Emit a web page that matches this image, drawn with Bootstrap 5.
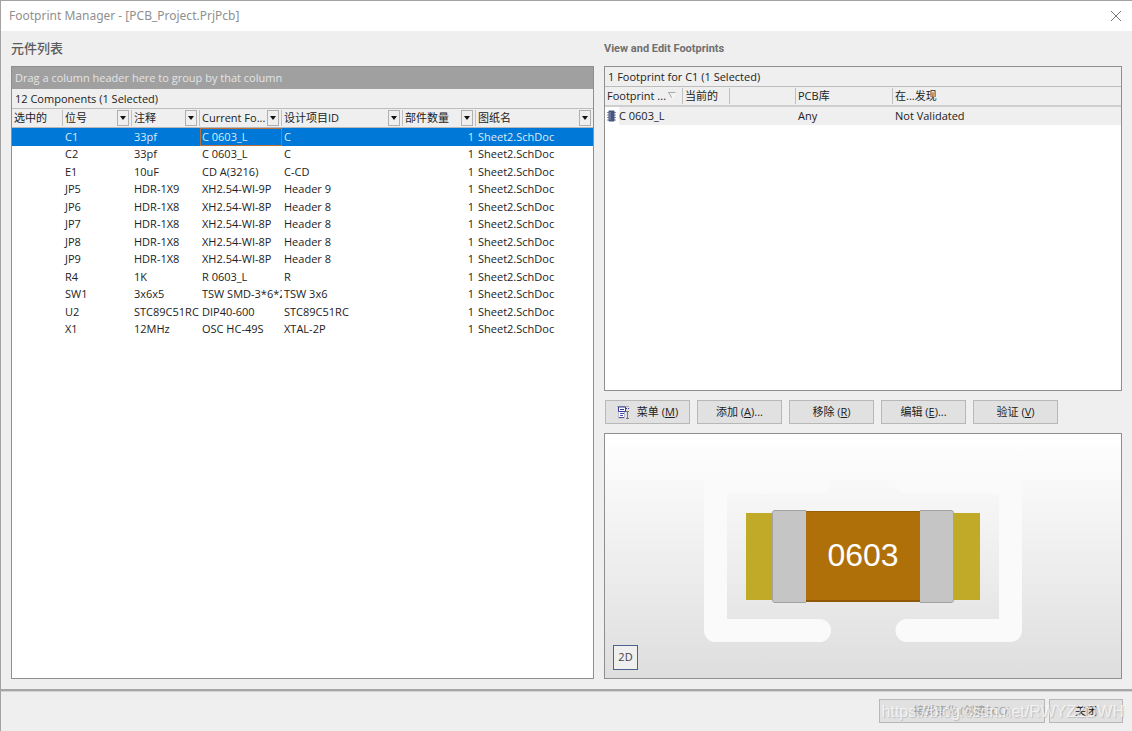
<!DOCTYPE html>
<html lang="zh-CN">
<head>
<meta charset="utf-8">
<meta name="viewport" content="width=device-width, initial-scale=1">
<title>Footprint Manager - [PCB_Project.PrjPcb]</title>
<link href="https://cdn.jsdelivr.net/npm/bootstrap@5.3.0/dist/css/bootstrap.min.css" rel="stylesheet">
<style>
  body { font-family: "Open Sans", "Noto Sans CJK SC", sans-serif; font-size: 11px; line-height: 16px; color: #222; background: #efefef; }
  .window-frame { border-top: 1px solid #a3a3a3; border-left: 1px solid #a3a3a3; }
  .title-strip { height: 30px; padding: 0 10px 0 8px; background: #fff; }
  .title-text { font-family: "Noto Sans", sans-serif; font-size: 12px; color: #8f8f8f; }
  .close-btn { width: 12px; height: 12px; }
  .work-area { padding: 7px 10px 10px 10px; gap: 10px; min-height: 0; }
  .pane-left { flex: 583 1 0; min-width: 0; }
  .pane-right { flex: 518 1 0; min-width: 0; }
  .pane-title { height: 28px; line-height: 20px; color: #5c5c5c; }
  .pane-title-cn { font-size: 13px; font-weight: 500; }
  .pane-title-en { font-family: Roboto, sans-serif; font-size: 11px; line-height: 22px; font-weight: 700; color: #707070; }
  .panel { border: 1px solid #8f8f8f; background: #fff; overflow: hidden; }
  .group-strip { height: 22px; line-height: 22px; padding-left: 3px; background: #a0a0a0; color: #e4e4e4; }
  .count-strip { height: 20px; line-height: 19px; padding-left: 3px; background: #efefef; border-bottom: 1px solid #bcbcbc; }
  .grid { width: 100%; table-layout: fixed; border-collapse: separate; border-spacing: 0; }
  .grid th, .grid td { padding: 0 0 0 2px; white-space: nowrap; overflow: hidden; font-weight: 400; }
  .grid th { height: 19px; background: #efefef; border-bottom: 1px solid #b8b8b8; line-height: 16px; }
  .grid th .head-cell { height: 16px; padding-right: 2px; border-right: 1px solid #c0c0c0; }
  .grid th:last-child .head-cell { border-right: 0; }
  .grid td { height: 18px; line-height: 16px; padding-bottom: 1px; }
  .grid tr:nth-child(even) td { height: 17px; }
  .grid tr.chosen td { background: #0078d7; color: #dcebf9; }
  .grid td.focused { outline: 1px solid #b5703c; outline-offset: -1px; }
  .grid td.quantity { padding-right: 2px; }
  .drop-btn { width: 12px; height: 16px; padding: 0; border: 1px solid #b0b0b0; background: #efefef; }
  .drop-btn svg { display: block; margin: auto; }
  .foot-grid th { height: 20px; border-bottom: 2px solid #cfcfcf; }
  .foot-grid td { background: #efefef; }
  .foot-grid td:first-child { background: linear-gradient(to right, #fff 14px, #efefef 14px); }
  .foot-grid .chip-icon { margin-right: 3px; }
  .foot-panel { height: 325px; }
  .tool-row { padding: 9px 1px; gap: 7px; }
  .push-btn { height: 24px; padding: 0; color: #222; background: #e1e1e1; border: 1px solid #b8b8b8; font-size: 11px; line-height: 20px; }
  .tool-row .push-btn { width: 85px; }
  .preview { background: linear-gradient(#fff, #dedede); min-height: 0; }
  .preview svg { display: block; width: 100%; height: 100%; }
  .mode-btn { left: 8px; bottom: 8px; width: 25px; height: 25px; padding: 0; border: 1px solid #4f6090; background: #efefef; color: #444; font-size: 11px; }
  .action-strip { height: 42px; padding: 8px 9px 0 0; gap: 4px; border-top: 2px solid #a6a6a6; box-shadow: inset 0 1px 0 #d4d4d4; }
  .eco-btn { width: 166px; color: #a3a3a3; }
  .exit-btn { width: 74px; color: #111; }
  .watermark { right: 8px; top: 11px; font: 16px/20px "Liberation Sans", sans-serif; color: rgba(255,255,255,.7); text-shadow: 1px 1px 1px rgba(0,0,0,.15); pointer-events: none; }
</style>
</head>
<body>
<div class="window-frame d-flex flex-column vh-100">
  <header class="title-strip d-flex align-items-center justify-content-between">
    <span class="title-text">Footprint Manager - [PCB_Project.PrjPcb]</span>
    <button class="close-btn btn p-0 border-0 d-flex" aria-label="Close"><svg width="12" height="12" viewBox="0 0 12 12"><path d="M1 1 11 11M11 1 1 11" stroke="#777" stroke-width="1"/></svg></button>
  </header>

  <main class="work-area d-flex flex-grow-1">
    <section class="pane-left d-flex flex-column">
      <div class="pane-title pane-title-cn">元件列表</div>
      <div class="panel flex-grow-1">
        <div class="group-strip">Drag a column header here to group by that column</div>
        <div class="count-strip">12 Components (1 Selected)</div>
        <table class="grid" id="components">
          <colgroup><col style="width:51px"><col style="width:69px"><col style="width:68px"><col style="width:82px"><col style="width:121px"><col style="width:73px"><col></colgroup>
          <thead><tr id="componentHeads"></tr></thead>
          <tbody id="componentRows"></tbody>
        </table>
      </div>
    </section>

    <section class="pane-right d-flex flex-column">
      <div class="pane-title pane-title-en">View and Edit Footprints</div>
      <div class="panel foot-panel flex-shrink-0">
        <div class="count-strip">1 Footprint for C1 (1 Selected)</div>
        <table class="grid foot-grid">
          <colgroup><col style="width:78px"><col style="width:47px"><col style="width:66px"><col style="width:97px"><col></colgroup>
          <thead><tr>
            <th><div class="head-cell d-flex justify-content-between">Footprint ...<svg class="me-1 mt-1" width="8" height="7" viewBox="0 0 8 7"><path d="M0 .5h7.5M1 1l3 5" fill="none" stroke="#aaa"/><path d="M7 1 4 6" stroke="#fff"/></svg></div></th>
            <th><div class="head-cell">当前的</div></th>
            <th><div class="head-cell"></div></th>
            <th><div class="head-cell">PCB库</div></th>
            <th><div class="head-cell">在...发现</div></th>
          </tr></thead>
          <tbody><tr>
            <td><div class="d-flex align-items-center"><svg class="chip-icon flex-shrink-0" width="9" height="12" viewBox="0 0 9 12"><path d="M0 2.5h9M0 5h9M0 7.5h9M0 10h9" stroke="#8089a8"/><rect x="1.5" y=".5" width="6" height="11" rx="1" fill="#48557f"/><path d="M3 2v8" stroke="#8792b5"/></svg>C 0603_L</div></td>
            <td></td><td></td><td>Any</td><td>Not Validated</td>
          </tr></tbody>
        </table>
      </div>
      <div class="tool-row d-flex">
        <button class="push-btn btn rounded-0 d-flex align-items-center justify-content-center"><svg class="me-2" width="12" height="13" viewBox="0 0 12 13"><path d="M0 .5h12" stroke="#aaa"/><path d="M1.5 1v4.500h7V1z" fill="#fff" stroke="#33389a"/><path d="M3 3.500h4" stroke="#33389a"/><path d="M1.500 6v6h6V6" fill="#fff" stroke="#b9b9cc"/><path d="M3 7.500h4M3 9.500h3M2 11.500h5" stroke="#4a4fb0"/><path d="M9 2.500h1M11 2.500h1" stroke="#33389a"/><path d="M9 5.500h3M10.500 6v6M9 12.500h3" stroke="#777"/></svg>菜单 (<u>M</u>)</button>
        <button class="push-btn btn rounded-0">添加 (<u>A</u>)...</button>
        <button class="push-btn btn rounded-0">移除 (<u>R</u>)</button>
        <button class="push-btn btn rounded-0">编辑 (<u>E</u>)...</button>
        <button class="push-btn btn rounded-0">验证 (<u>V</u>)</button>
      </div>
      <div class="panel preview flex-grow-1 position-relative">
        <svg viewBox="605 434 516 244" role="img" aria-label="0603">
          <g fill="none" stroke="#fafafa" stroke-width="23" stroke-linecap="round" stroke-linejoin="round">
            <path d="M819.500 482.500H715.500V630.500H819.500"/>
            <path d="M907 482.500H1010.500V630.500H907"/>
          </g>
          <path d="M746 513h28v87h-28zM952 513h28v87h-28z" fill="#c2aa29"/>
          <rect x="806" y="511" width="115" height="91" fill="#b07009"/>
          <path d="M806 511.500h115" stroke="#9a6208"/><path d="M806 601h115" stroke="#8f5806" stroke-width="2"/>
          <path d="M774 510h32v93h-32l-2-2v-89zM920 510h32l2 2v89l-2 2h-32z" fill="#c5c5c5"/>
          <path d="M806 510.500h-32l-1.500 2v88l1.500 2h32M920 510.500h32l1.500 2v88l-1.500 2h-32" fill="none" stroke="#a3a3a3"/>
          <text x="863" y="566" text-anchor="middle" font-family="Liberation Sans, sans-serif" font-size="32" fill="#fff">0603</text>
        </svg>
        <button class="mode-btn btn rounded-0 position-absolute">2D</button>
      </div>
    </section>
  </main>

  <footer class="action-strip d-flex justify-content-end position-relative">
    <button class="push-btn eco-btn btn rounded-0">接受变化 (创建ECO)</button>
    <button class="push-btn exit-btn btn rounded-0">关闭</button>
    <span class="watermark position-absolute">https://blog.csdn.net/RWYZZDWH</span>
  </footer>
</div>
<script src="https://cdn.jsdelivr.net/npm/bootstrap@5.3.0/dist/js/bootstrap.bundle.min.js"></script>
<script>
  const heads = ["选中的", "位号", "注释", "Current Fo...", "设计项目ID", "部件数量", "图纸名"];
  const parts = [
    ["C1", "33pf", "C 0603_L", "C"],
    ["C2", "33pf", "C 0603_L", "C"],
    ["E1", "10uF", "CD A(3216)", "C-CD"],
    ["JP5", "HDR-1X9", "XH2.54-WI-9P", "Header 9"],
    ["JP6", "HDR-1X8", "XH2.54-WI-8P", "Header 8"],
    ["JP7", "HDR-1X8", "XH2.54-WI-8P", "Header 8"],
    ["JP8", "HDR-1X8", "XH2.54-WI-8P", "Header 8"],
    ["JP9", "HDR-1X8", "XH2.54-WI-8P", "Header 8"],
    ["R4", "1K", "R 0603_L", "R"],
    ["SW1", "3x6x5", "TSW SMD-3*6*2", "TSW 3x6"],
    ["U2", "STC89C51RC", "DIP40-600", "STC89C51RC"],
    ["X1", "12MHz", "OSC HC-49S", "XTAL-2P"]
  ];
  const arrow = '<svg width="6" height="4" viewBox="0 0 6 4"><path d="M0 0h6L3 4z" fill="#111"/></svg>';
  document.getElementById("componentHeads").innerHTML = heads.map((h, i) =>
    `<th><div class="head-cell d-flex justify-content-between"><span>${h}</span>${i ? `<button class="drop-btn" aria-label="${h}">${arrow}</button>` : ""}</div></th>`).join("");
  document.getElementById("componentRows").innerHTML = parts.map((p, i) =>
    `<tr class="${i ? "" : "chosen"}"><td></td><td>${p[0]}</td><td>${p[1]}</td><td class="${i ? "" : "focused"}">${p[2]}</td><td>${p[3]}</td><td class="quantity text-end">1</td><td>Sheet2.SchDoc</td></tr>`).join("");
</script>
</body>
</html>
